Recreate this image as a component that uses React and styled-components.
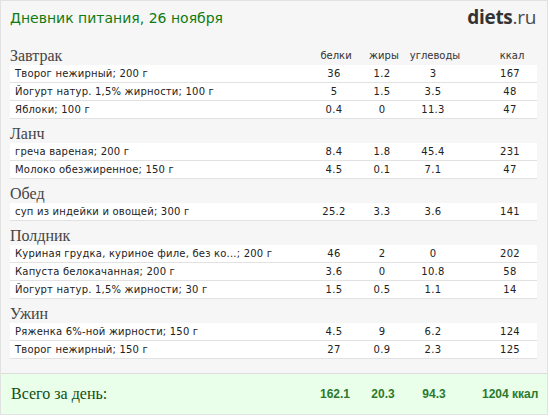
import styled, { createGlobalStyle } from "styled-components";

const GlobalStyle = createGlobalStyle`
    html, body {
        margin: 0;
        padding: 0;
        background: #fff;
    }
`;

const meals = [
    {
        title: "Завтрак",
        items: [
            ["Творог нежирный; 200 г", "36", "1.2", "3", "167"],
            ["Йогурт натур. 1,5% жирности; 100 г", "5", "1.5", "3.5", "48"],
            ["Яблоки; 100 г", "0.4", "0", "11.3", "47"],
        ],
    },
    {
        title: "Ланч",
        items: [
            ["греча вареная; 200 г", "8.4", "1.8", "45.4", "231"],
            ["Молоко обезжиренное; 150 г", "4.5", "0.1", "7.1", "47"],
        ],
    },
    {
        title: "Обед",
        items: [["суп из индейки и овощей; 300 г", "25.2", "3.3", "3.6", "141"]],
    },
    {
        title: "Полдник",
        items: [
            ["Куриная грудка, куриное филе, без ко...; 200 г", "46", "2", "0", "202"],
            ["Капуста белокачанная; 200 г", "3.6", "0", "10.8", "58"],
            ["Йогурт натур. 1,5% жирности; 30 г", "1.5", "0.5", "1.1", "14"],
        ],
    },
    {
        title: "Ужин",
        items: [
            ["Ряженка 6%-ной жирности; 150 г", "4.5", "9", "6.2", "124"],
            ["Творог нежирный; 150 г", "27", "0.9", "2.3", "125"],
        ],
    },
];

const App = () => {
    return (
        <>
            <GlobalStyle />
            <Frame>
                <Header>
                    <Title>Дневник питания, 26 ноября</Title>
                    <Logo>
                        <b>diets</b>.ru
                    </Logo>
                </Header>

                <Body>
                    {meals.map((meal, i) => (
                        <Section key={meal.title}>
                            <HeadRow>
                                <MealTitle>{meal.title}</MealTitle>
                                {i === 0 && (
                                    <>
                                        <ColHead>белки</ColHead>
                                        <ColHead>жиры</ColHead>
                                        <ColHead>углеводы</ColHead>
                                        <ColHead $last>ккал</ColHead>
                                    </>
                                )}
                            </HeadRow>
                            {meal.items.map((row) => (
                                <Row key={row[0]}>
                                    <Name>{row[0]}</Name>
                                    <Num>{row[1]}</Num>
                                    <Num>{row[2]}</Num>
                                    <Num>{row[3]}</Num>
                                    <Num $last>{row[4]}</Num>
                                </Row>
                            ))}
                        </Section>
                    ))}
                </Body>

                <Footer>
                    <Total>Всего за день:</Total>
                    <TotalNum>162.1</TotalNum>
                    <TotalNum>20.3</TotalNum>
                    <TotalNum>94.3</TotalNum>
                    <TotalNum $last>1204 ккал</TotalNum>
                </Footer>
            </Frame>
        </>
    );
};

export default App;

const Frame = styled.div`
    width: 548px;
    height: 415px;
    box-sizing: border-box;
    border: 1px solid #e2e2e2;
    background: #f6f6f6;
    display: flex;
    flex-direction: column;
`;

const Header = styled.div`
    display: flex;
    justify-content: space-between;
    align-items: center;
    height: 32px;
    padding: 0 11px 0 9px;
`;

const Title = styled.div`
    font-family: "DejaVu Sans", Verdana, sans-serif;
    font-size: 14px;
    color: #117a11;
    margin-top: 1px;
`;

const Logo = styled.div`
    font-family: "Open Sans", Arial, sans-serif;
    font-size: 19px;
    color: #4a4a4a;
    letter-spacing: -0.3px;
    b {
        font-weight: 700;
        color: #333;
    }
`;

const Body = styled.div`
    padding: 8px 10px 0 9px;
`;

const Section = styled.div`
    margin-top: 5px;
`;

const grid = `
    display: grid;
    grid-template-columns: 1fr 50px 46px 56px 74px;
    align-items: center;
`;

const HeadRow = styled.div`
    ${grid}
    height: 19px;
`;

const MealTitle = styled.div`
    font-family: "Liberation Serif", Georgia, serif;
    font-size: 16px;
    color: #444;
`;

const ColHead = styled.div`
    font-family: "DejaVu Sans", Verdana, sans-serif;
    font-size: 10px;
    color: #333;
    text-align: center;
    padding-left: ${(p) => (p.$last ? "24px" : "0")};
`;

const Row = styled.div`
    ${grid}
    height: 17px;
    background: #fff;
    border-bottom: 1px solid #e2e2e2;
    padding: 0 2px 0 5px;
    font-family: "DejaVu Sans", Verdana, sans-serif;
    font-size: 10px;
    color: #222;
`;

const Name = styled.div`
    white-space: nowrap;
    letter-spacing: 0.2px;
`;

const Num = styled.div`
    text-align: center;
    letter-spacing: 0.3px;
    padding-left: ${(p) => (p.$last ? "24px" : "0")};
`;

const Footer = styled.div`
    ${grid}
    margin-top: auto;
    height: 40px;
    border-top: 1px solid #dcdcdc;
    background: #eaffea;
    padding: 0 11px 0 10px;
`;

const Total = styled.div`
    font-family: "Liberation Serif", Georgia, serif;
    font-size: 16px;
    color: #0f4f0f;
`;

const TotalNum = styled.div`
    font-family: "Liberation Sans", Arial, sans-serif;
    font-weight: 700;
    font-size: 12px;
    color: #2a7a2a;
    text-align: center;
    white-space: nowrap;
    padding-left: ${(p) => (p.$last ? "20px" : "0")};
`;
